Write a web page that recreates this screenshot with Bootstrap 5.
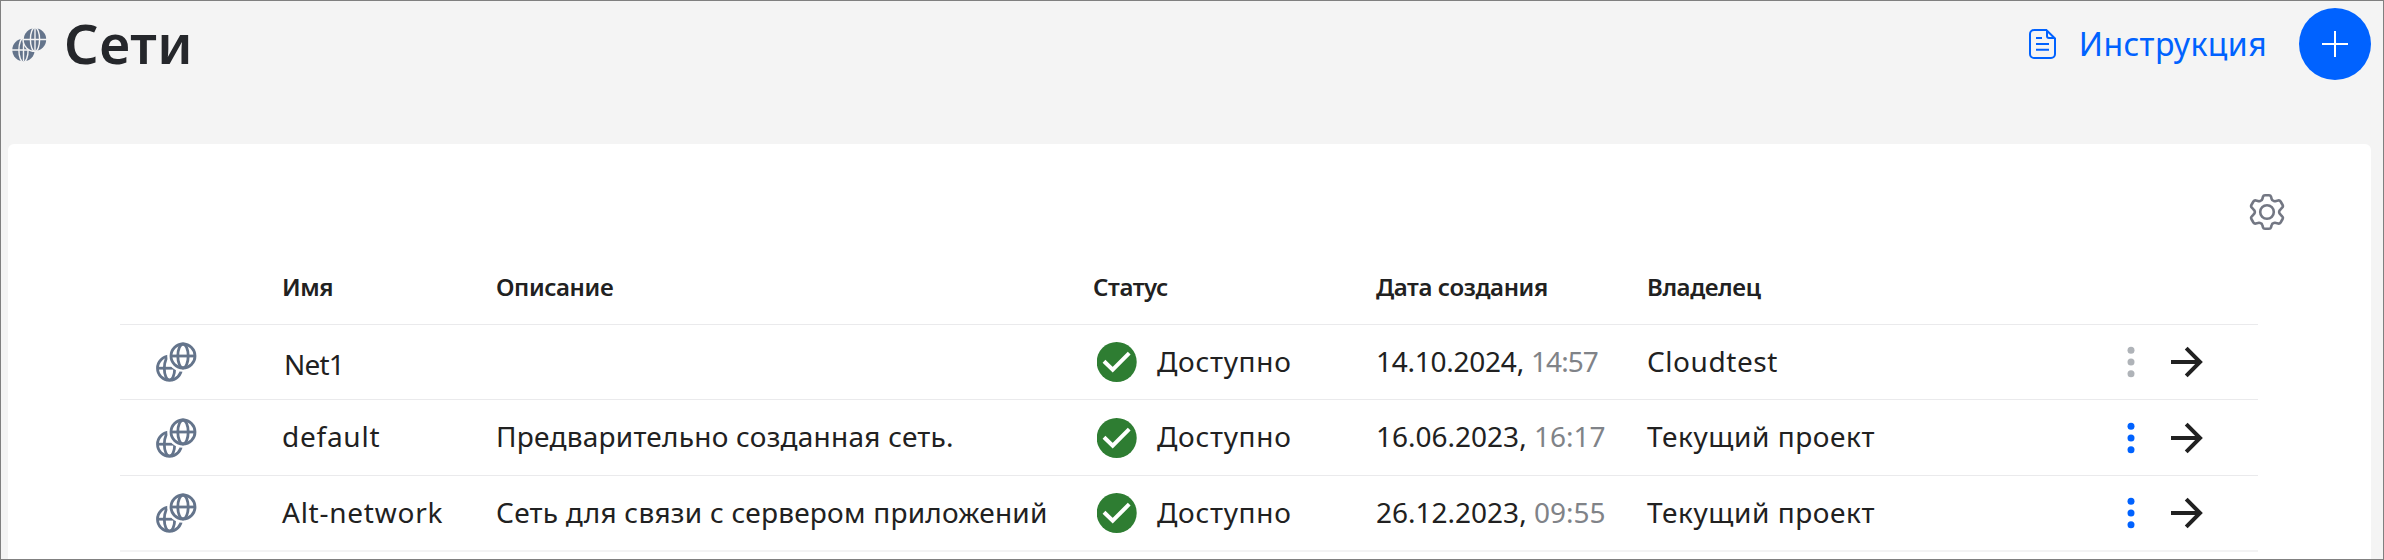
<!DOCTYPE html>
<html lang="ru">
<head>
<meta charset="utf-8">
<meta name="viewport" content="width=device-width, initial-scale=1">
<title>Сети</title>
<link href="https://cdn.jsdelivr.net/npm/bootstrap@5.3.0/dist/css/bootstrap.min.css" rel="stylesheet">
<style>
body{font-family:"Noto Sans","Open Sans",sans-serif;background:#f4f4f4;color:#212121;overflow:hidden}
.frame{height:560px;border:1px solid #808080;overflow:hidden}
.topbar{height:143px;padding:7px 12px 0 11px}
.title-icon{margin-top:20px}
.page-title{font-size:54px;font-weight:600;line-height:70px;color:#25272b;margin:0 0 0 17px;letter-spacing:.6px}
.help-link{font-size:32px;line-height:71px;color:#0062ff;letter-spacing:.4px}
.help-link svg{margin:21px 23px 0 0}
.add-btn{width:72px;height:72px;margin-left:32px;background:#0062ff}
.panel{margin:0 12px 0 7px;height:420px;border:0;border-radius:6px 6px 0 0;background:#fff}
.panel-tools{height:102px;padding:49px 86px 0 0}
.net-table{width:2138px;margin:0 0 0 112px;table-layout:fixed;border-collapse:separate;border-spacing:0;font-size:28px;line-height:38px;white-space:nowrap}
.net-table th,.net-table td{padding:0;background:transparent;border-bottom:1px solid #eaeaec;vertical-align:middle;color:#212121;letter-spacing:.57px}
.net-table th{height:79px;padding-top:3px;font-size:24px;font-weight:600;letter-spacing:-.4px}
.net-table td{height:75px;padding-bottom:3px}
.net-table .graphic{padding-bottom:0}
.net-table .graphic span{padding-bottom:3px;letter-spacing:.7px}
.net-table tr.tall td{height:76px}
.net-table tr.end td{height:76px;border-bottom:2px solid #f3f3f4}
.net-table .latin{letter-spacing:.75px}
.net-table .latin.first{letter-spacing:-.8px;padding:4px 0 0 2px}
.net-table .about{letter-spacing:.24px}
.net-table .stamp{letter-spacing:0}
.net-table .stamp.narrow{letter-spacing:-.25px}
.net-table .stamp.narrow time{letter-spacing:-.9px}
.net-table time{color:#808388}
.net-icon{margin-left:35px}
.ok-icon{margin:0 20px 0 4px}
.dots-icon{margin-right:36px;fill:#0062ff}
.dots-icon.off{fill:#afb3b8}
.arrow-icon{margin-right:55px}
svg{display:block;flex:none}
</style>
</head>
<body>
<svg width="0" height="0" class="position-absolute" aria-hidden="true">
<symbol id="globes" viewBox="0 0 42 40">
<mask id="cut"><path fill="#fff" d="M0 0h42v40H0z"/><circle cx="28" cy="14" r="15.8" fill="#000"/></mask>
<g fill="none" stroke="#64748b" stroke-width="2.8">
<g><circle cx="28" cy="14" r="12"/><ellipse cx="28" cy="14" rx="5.2" ry="12"/><path d="M16 14h24"/></g>
<g mask="url(#cut)"><circle cx="14.5" cy="26.2" r="12"/><ellipse cx="14.5" cy="26.2" rx="5.2" ry="12"/><path d="M2.5 26.2h24"/></g>
</g></symbol>
<symbol id="ok" viewBox="0 0 40 40"><circle cx="19.700" cy="20" r="20" fill="#2e7d32"/><path d="M7 19.2l8.7 8.5L32.2 11.2" fill="none" stroke="#fff" stroke-width="4"/></symbol>
<symbol id="dots" viewBox="0 0 8 32"><circle cx="4" cy="4.3" r="3.5"/><circle cx="4" cy="16" r="3.5"/><circle cx="4" cy="27.7" r="3.5"/></symbol>
<symbol id="arrow" viewBox="0 0 32 32"><path d="M0 16h29.5M15.2 2.2L29 16 15.2 29.8" fill="none" stroke="#212121" stroke-width="4"/></symbol>
</svg>
<div class="frame">
<header class="topbar d-flex justify-content-between align-items-start">
<div class="d-flex">
<svg class="title-icon" width="35" height="34" viewBox="0 0 35 34">
<mask id="cut-title"><path fill="#fff" d="M0 0h35v34H0z"/><circle cx="23" cy="11.5" r="12.6" fill="#000"/></mask>
<g fill="#64748b" stroke="#f4f4f4" stroke-width="1.4"><g mask="url(#cut-title)"><circle cx="11.5" cy="22" r="11.2" stroke="none"/><ellipse cx="11.5" cy="22" rx="4.6" ry="12"/><path d="M0 22h24M11.5 10v23"/></g>
<circle cx="23" cy="11.5" r="11.2" stroke="none"/><ellipse cx="23" cy="11.5" rx="4.6" ry="12"/><path d="M11 11.5h24M23 0v23"/></g></svg>
<h1 class="page-title">Сети</h1>
</div>
<div class="d-flex">
<a href="#" class="help-link d-flex text-decoration-none">
<svg width="27" height="30" viewBox="0 0 27 30" fill="none" stroke="#0062ff" stroke-width="2"><path d="M5 1h12.3L26 9.5V25a4 4 0 0 1-4 4H5a4 4 0 0 1-4-4V5a4 4 0 0 1 4-4z"/><path d="M18 1.5V7a2 2 0 0 0 2 2h5.500"/><path d="M7 9h6M7 15h13M7 20.7h13"/></svg>
<span>Инструкция</span></a>
<button class="add-btn btn rounded-circle border-0 p-0 d-flex align-items-center justify-content-center" aria-label="Создать"><svg width="26" height="26" viewBox="0 0 26 26" stroke="#fff" stroke-width="2"><path d="M0 13h26M13 0v26"/></svg></button>
</div>
</header>
<main class="panel card">
<div class="panel-tools d-flex justify-content-end align-items-start">
<svg width="36" height="38" viewBox="0 0 36 38" fill="none" stroke="#737783" stroke-width="2.6" stroke-linejoin="round"><circle cx="18" cy="19" r="6.8"/><path d="M16 2.2h4q1.600 0 2 1.500l.6 2.200q.4 1.700 2.200 2.100 1.200.5 2.300 0l2-.5q1.600-.4 2.500 1l2 3.500q.8 1.400-.4 2.600l-1.500 1.600q-1.600 1.400-1.600 2.800t1.600 2.800l1.500 1.600q1.200 1.200.4 2.600l-2 3.500q-.9 1.400-2.500 1l-2-.5q-1.100-.5-2.300 0-1.800.4-2.200 2.100l-.6 2.200q-.4 1.500-2 1.500h-4q-1.600 0-2-1.500l-.6-2.200q-.4-1.700-2.200-2.100-1.200-.5-2.300 0l-2 .5q-1.600.4-2.500-1l-2-3.500q-.8-1.400.4-2.600l1.500-1.600q1.600-1.400 1.600-2.800t-1.600-2.800l-1.500-1.600q-1.200-1.200-.4-2.600l2-3.500q.9-1.400 2.500-1l2 .5q1.100.5 2.300 0 1.800-.4 2.200-2.100l.6-2.200q.4-1.500 2-1.500z"/></svg>
</div>
<table class="table net-table">
<colgroup><col style="width:162px"><col style="width:214px"><col style="width:597px"><col style="width:283px"><col style="width:271px"><col style="width:400px"><col></colgroup>
<thead><tr><th></th><th>Имя</th><th>Описание</th><th>Статус</th><th>Дата создания</th><th>Владелец</th><th></th></tr></thead>
<tbody>
<tr>
<td class="graphic"><svg class="net-icon" width="42" height="40"><use href="#globes"/></svg></td>
<td class="latin first">Net1</td><td></td>
<td class="graphic"><div class="d-flex align-items-center"><svg class="ok-icon" width="40" height="40"><use href="#ok"/></svg><span>Доступно</span></div></td>
<td class="stamp narrow">14.10.2024, <time>14:57</time></td><td>Cloudtest</td>
<td class="graphic"><div class="d-flex justify-content-end align-items-center"><svg class="dots-icon off" width="8" height="32"><use href="#dots"/></svg><svg class="arrow-icon" width="32" height="32"><use href="#arrow"/></svg></div></td>
</tr>
<tr class="tall">
<td class="graphic"><svg class="net-icon" width="42" height="40"><use href="#globes"/></svg></td>
<td class="latin">default</td><td class="about">Предварительно созданная сеть.</td>
<td class="graphic"><div class="d-flex align-items-center"><svg class="ok-icon" width="40" height="40"><use href="#ok"/></svg><span>Доступно</span></div></td>
<td class="stamp">16.06.2023, <time>16:17</time></td><td>Текущий проект</td>
<td class="graphic"><div class="d-flex justify-content-end align-items-center"><svg class="dots-icon" width="8" height="32"><use href="#dots"/></svg><svg class="arrow-icon" width="32" height="32"><use href="#arrow"/></svg></div></td>
</tr>
<tr class="end">
<td class="graphic"><svg class="net-icon" width="42" height="40"><use href="#globes"/></svg></td>
<td class="latin">Alt-network</td><td class="about">Сеть для связи с сервером приложений</td>
<td class="graphic"><div class="d-flex align-items-center"><svg class="ok-icon" width="40" height="40"><use href="#ok"/></svg><span>Доступно</span></div></td>
<td class="stamp">26.12.2023, <time>09:55</time></td><td>Текущий проект</td>
<td class="graphic"><div class="d-flex justify-content-end align-items-center"><svg class="dots-icon" width="8" height="32"><use href="#dots"/></svg><svg class="arrow-icon" width="32" height="32"><use href="#arrow"/></svg></div></td>
</tr>
</tbody>
</table>
</main>
</div>
<script src="https://cdn.jsdelivr.net/npm/bootstrap@5.3.0/dist/js/bootstrap.bundle.min.js"></script>
</body>
</html>
